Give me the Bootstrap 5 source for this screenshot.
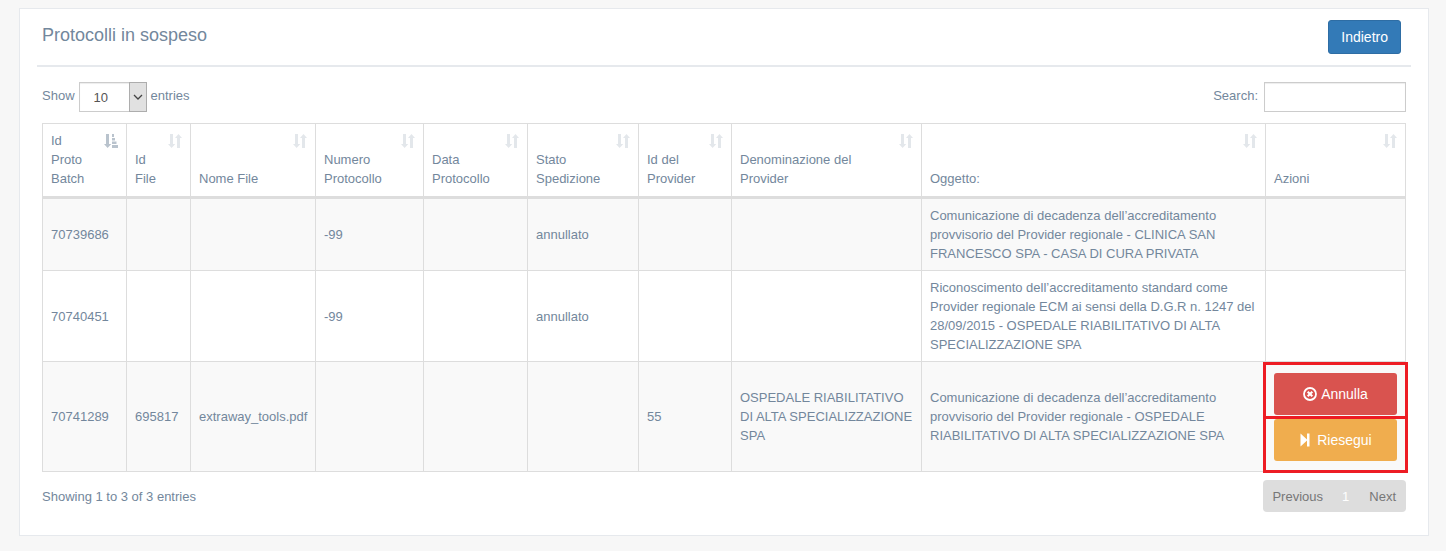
<!DOCTYPE html>
<html lang="it">
<head>
<meta charset="utf-8">
<meta name="viewport" content="width=device-width, initial-scale=1">
<title>Protocolli in sospeso</title>
<link href="https://cdn.jsdelivr.net/npm/bootstrap@5.3.0/dist/css/bootstrap.min.css" rel="stylesheet">
<style>
body{background:#f7f7f7;color:#73879c;font:400 13px/19px "Liberation Sans",Arial,sans-serif}
.x-panel{background:#fff;border:1px solid #e6e9ed;margin:8px 17px 16px 19px;padding:11px 17px 23px}
.x-title{border-bottom:2px solid #e6e9ed;padding:0 10px 11px 5px}
.x-title h1{font-size:18px;line-height:20px;font-weight:400;margin:5px 0 0}
.x-content{padding:15px 5px 0}
.btn-back{--bs-btn-color:#fff;--bs-btn-bg:#337ab7;--bs-btn-border-color:#2e6da4;--bs-btn-hover-color:#fff;--bs-btn-hover-bg:#286090;font-size:14px;line-height:20px;padding:6px 12px;border-radius:3px}
.tools{margin-bottom:11px}
.tools label{padding-bottom:3px}
.search-row{gap:6px}
.field-len,.field-search{height:30px;border:1px solid #ccc;background:#fff;color:#555;border-radius:0;font-size:13px;box-shadow:inset 0 1px 1px rgba(0,0,0,.075)}
.field-len{width:68px;padding:0 14px;appearance:none}
.field-search{width:142px;padding:4px 8px}
.arrow-box{right:0;top:0;bottom:0;width:18px;background:#e1e1e1;border:1px solid #adadad;pointer-events:none}
.tbl{--bs-table-color:#73879c;--bs-table-striped-color:#73879c;--bs-table-striped-bg:#f9f9f9;table-layout:fixed;min-width:1200px;margin:0;border-color:#ddd}
.tbl>:not(caption)>*>*{padding:7px 8px;border:1px solid #ddd}
.tbl>thead>tr>th{font-weight:400;vertical-align:bottom;position:relative;border-bottom-width:3px;padding-right:30px;padding-bottom:8px}
.sort{position:absolute;right:8px;top:10px;width:14px;height:14px;fill:#e3e7eb}
.sort.on{fill:#b9c3cd}
.tbl>tbody>tr>td.acts{padding-top:11px;padding-bottom:10px}
.btn-act{height:42px;border:0;border-radius:3px;color:#fff;font-size:14px;line-height:20px;padding:0}
.btn-act:hover{color:#fff}
.btn-no{background:#d9534f}.btn-no:hover{background:#c9302c}
.btn-re{background:#f0ad4e}.btn-re:hover{background:#ec971f}
.frame{position:absolute;left:-11px;right:-11px;height:57px;border:3px solid #ed1c24;pointer-events:none}
.frame-a{top:-11px}.frame-b{bottom:-12px}
.pager{background:#ddd;border-radius:4px;height:32px}
.pager a{color:#777;text-decoration:none;padding:0 10px}
.pager a.now{color:#fff}
.pager li:first-child a{padding:0 9px}
</style>
</head>
<body>
<svg class="d-none" aria-hidden="true">
  <symbol id="both" viewBox="0 0 14 14"><path d="M2 0h3v10h2.300L3.600 14 0 10h2zM9 14V4H7L10.500 0 14 4h-2v10z"/></symbol>
  <symbol id="asc" viewBox="0 0 14 14"><path d="M2 0h3v10h2.300L3.600 14 0 10h2zM8 0h2v3H8zM8 4h3v2.500H8zM8 7.500h4.500V10H8zM8 11h6v3H8z"/></symbol>
</svg>
<main class="x-panel">
  <div class="x-title d-flex justify-content-between align-items-start">
    <h1>Protocolli in sospeso</h1>
    <button type="button" class="btn btn-back">Indietro</button>
  </div>
  <div class="x-content">
    <div class="tools d-flex justify-content-between">
      <div class="d-flex align-items-center gap-1">
        <label for="len">Show</label>
        <span class="position-relative d-flex">
          <select id="len" class="field-len"><option>10</option><option>25</option><option>50</option></select>
          <span class="arrow-box position-absolute d-flex align-items-center justify-content-center"><svg width="10" height="6" viewBox="0 0 10 6" fill="none" stroke="#444" stroke-width="1.300"><path d="M1 1l4 4 4-4"/></svg></span>
        </span>
        <label for="len">entries</label>
      </div>
      <div class="search-row d-flex align-items-center">
        <label for="search">Search:</label>
        <input id="search" type="search" class="field-search">
      </div>
    </div>
    <table class="table table-striped tbl">
      <colgroup><col style="width:84px"><col style="width:64px"><col style="width:125px"><col style="width:108px"><col style="width:104px"><col style="width:111px"><col style="width:93px"><col style="width:190px"><col><col style="width:140px"></colgroup>
      <thead>
        <tr>
          <th scope="col">Id Proto Batch<svg class="sort on"><use href="#asc"/></svg></th>
          <th scope="col">Id File<svg class="sort"><use href="#both"/></svg></th>
          <th scope="col">Nome File<svg class="sort"><use href="#both"/></svg></th>
          <th scope="col">Numero Protocollo<svg class="sort"><use href="#both"/></svg></th>
          <th scope="col">Data Protocollo<svg class="sort"><use href="#both"/></svg></th>
          <th scope="col">Stato Spedizione<svg class="sort"><use href="#both"/></svg></th>
          <th scope="col">Id del Provider<svg class="sort"><use href="#both"/></svg></th>
          <th scope="col">Denominazione del Provider<svg class="sort"><use href="#both"/></svg></th>
          <th scope="col">Oggetto:<svg class="sort"><use href="#both"/></svg></th>
          <th scope="col">Azioni<svg class="sort"><use href="#both"/></svg></th>
        </tr>
      </thead>
      <tbody class="align-middle">
        <tr><td>70739686</td><td></td><td></td><td>-99</td><td></td><td>annullato</td><td></td><td></td><td>Comunicazione di decadenza dell’accreditamento provvisorio del Provider regionale - CLINICA SAN FRANCESCO SPA - CASA DI CURA PRIVATA</td><td></td></tr>
        <tr><td>70740451</td><td></td><td></td><td>-99</td><td></td><td>annullato</td><td></td><td></td><td>Riconoscimento dell’accreditamento standard come Provider regionale ECM ai sensi della D.G.R n. 1247 del 28/09/2015 - OSPEDALE RIABILITATIVO DI ALTA SPECIALIZZAZIONE SPA</td><td></td></tr>
        <tr><td>70741289</td><td>695817</td><td>extraway_tools.pdf</td><td></td><td></td><td></td><td>55</td><td>OSPEDALE RIABILITATIVO DI ALTA SPECIALIZZAZIONE SPA</td><td>Comunicazione di decadenza dell’accreditamento provvisorio del Provider regionale - OSPEDALE RIABILITATIVO DI ALTA SPECIALIZZAZIONE SPA</td>
          <td class="acts">
            <div class="position-relative d-grid gap-1">
              <button type="button" class="btn btn-act btn-no d-flex align-items-center justify-content-center gap-1"><svg width="14" height="14" viewBox="0 0 14 14" fill="none" stroke="#fff"><circle cx="7" cy="7" r="6" stroke-width="1.800"/><path d="M4.700 4.700l4.600 4.600M9.300 4.700L4.700 9.300" stroke-width="2.100"/></svg>Annulla</button>
              <button type="button" class="btn btn-act btn-re d-flex align-items-center justify-content-center gap-1"><svg width="14" height="14" viewBox="0 0 14 14" fill="#fff"><path d="M1.500.5L8 6.500V.5h2.500v13H8V7.500L1.500 13.500z"/></svg>Riesegui</button>
              <span class="frame frame-a"></span><span class="frame frame-b"></span>
            </div>
          </td></tr>
      </tbody>
    </table>
    <div class="d-flex justify-content-between align-items-center mt-2">
      <div>Showing 1 to 3 of 3 entries</div>
      <nav aria-label="Pagine"><ul class="pager list-unstyled d-flex align-items-center m-0"><li><a href="#">Previous</a></li><li><a href="#" class="now">1</a></li><li><a href="#">Next</a></li></ul></nav>
    </div>
  </div>
</main>
<script src="https://cdn.jsdelivr.net/npm/bootstrap@5.3.0/dist/js/bootstrap.bundle.min.js"></script>
</body>
</html>
